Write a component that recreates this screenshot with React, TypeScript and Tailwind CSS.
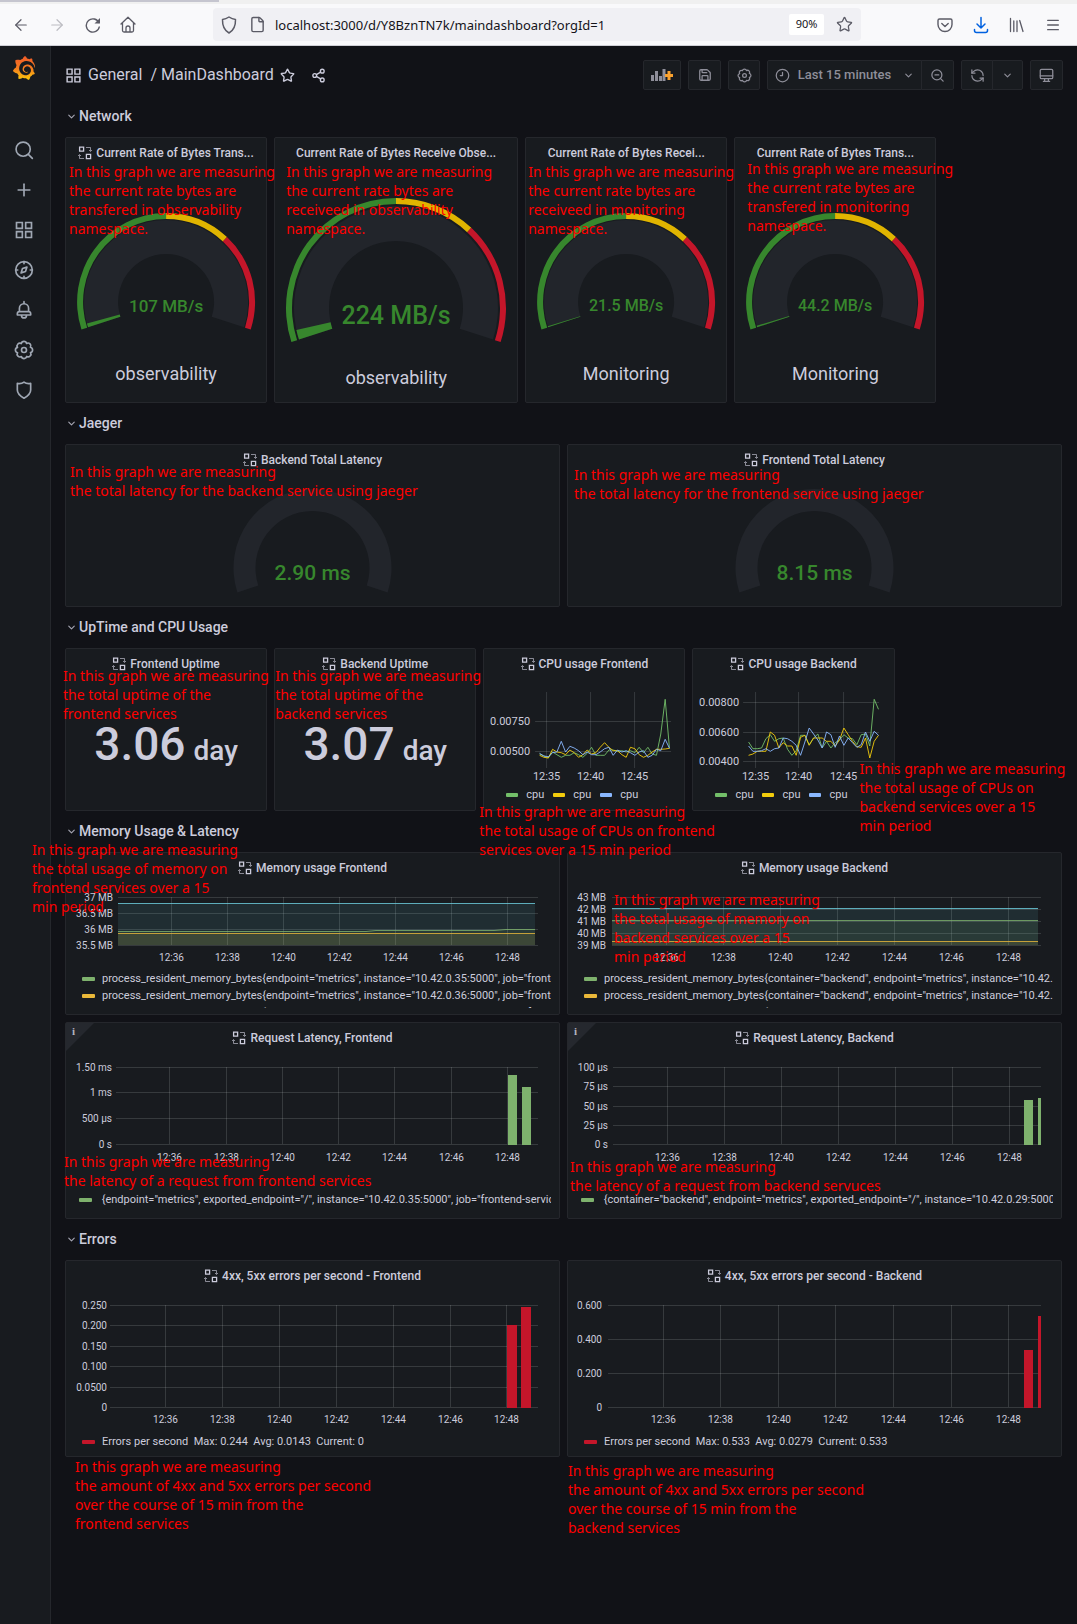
import React from "react";
import {
  ArrowLeft,
  ArrowRight,
  ChevronDown,
  File,
  Menu,
  Plus,
  RefreshCcw,
  Save,
  Share2,
  Star,
  ZoomOut,
} from "lucide-react";
import { SiGrafana } from "react-icons/si";

/* ---------- icons ---------- */

type IconProps = { size?: number; className?: string };

function Svg({ size = 20, className, children }: IconProps & { children: React.ReactNode }) {
  return (
    <svg
      width={size}
      height={size}
      viewBox="0 0 24 24"
      fill="none"
      stroke="currentColor"
      strokeWidth={2}
      strokeLinecap="round"
      strokeLinejoin="round"
      className={className}
      aria-hidden="true"
    >
      {children}
    </svg>
  );
}

const GEAR_PATH = (() => {
  const pts = Array.from({ length: 8 }, (_, k) => {
    const a = ((k * 45 + 22) * Math.PI) / 180;
    return [12 + 8.4 * Math.cos(a), 12 + 8.4 * Math.sin(a)].map((v) => v.toFixed(2)).join(" ");
  });
  return `M${pts[0]}` + pts.slice(1).concat(pts[0]).map((p) => `A3.3 3.3 0 0 1 ${p}`).join("") + "Z";
})();

const GearIcon = (p: IconProps) => (
  <Svg {...p}>
    <path d={GEAR_PATH} />
    <circle cx="12" cy="12" r="3" />
  </Svg>
);
const AppsIcon = (p: IconProps) => (
  <Svg {...p}>
    <path d="M3 3h7v7H3zM14 3h7v7h-7zM3 14h7v7H3zM14 14h7v7h-7z" strokeLinejoin="miter" />
  </Svg>
);
const SearchIcon = (p: IconProps) => (
  <Svg {...p}>
    <circle cx="11" cy="11" r="8.5" />
    <path d="M17.2 17.2 22 22" />
  </Svg>
);
const CompassIcon = (p: IconProps) => (
  <Svg {...p}>
    <circle cx="12" cy="12" r="10" />
    <path d="M12 2v2.500M12 19.500V22M2 12h2.500M19.500 12H22M15.500 8.500l-1.700 5.300-5.300 1.700 1.700-5.300z" />
  </Svg>
);
const BellIcon = (p: IconProps) => (
  <Svg {...p}>
    <path d="M12 2v2M6.500 14V10a5.500 5.500 0 0 1 11 0v4M6.500 14a2.500 2.500 0 0 0-2.500 2.500V18h16v-1.500a2.500 2.500 0 0 0-2.500-2.500zM9 18.500a3 3 0 0 0 6 0" />
  </Svg>
);
const ShieldIcon = (p: IconProps) => (
  <Svg {...p}>
    <path d="M12 2.500c2.500 1.800 5 2.200 8 1.500v8c0 4-3.500 7.300-8 9.800-4.500-2.500-8-5.800-8-9.800V4c3 .7 5.500.3 8-1.500z" />
  </Svg>
);
const HistoryIcon = (p: IconProps) => (
  <Svg {...p}>
    <circle cx="12" cy="12" r="10" />
    <path d="M12 7v5H8.500" />
  </Svg>
);
const MonitorIcon = (p: IconProps) => (
  <Svg {...p}>
    <rect x="2" y="2" width="20" height="15" rx="2" />
    <path d="M2 12.500h20M9 17v4M15 17v4M7 21.500h10" />
  </Svg>
);
const AddPanelIcon = () => (
  <svg width="22" height="14" viewBox="0 0 22 14" aria-hidden="true">
    <path d="M0 7h3v6H0zM4 3h3v10H4zM8 8h3v5H8zM11.500 1h3v12h-3z" fill="#8e8e99" />
    <path d="M16.500 3h3v3h2.500v3h-2.500v3h-3V9H14V6h2.500z" fill="#f9a12e" />
  </svg>
);
const TransformIcon = () => (
  <svg width="14" height="14" viewBox="0 0 14 14" fill="none" stroke="#ccccdc" aria-hidden="true" className="shrink-0">
    <path d="M1.600 1.100h4v4h-4zM8.400 8.400h4.200v4.200H8.400z" strokeWidth="1.300" />
    <path d="M8 1.500h4.500v3.500M11 4l1.500 1.500L14 4M6 12.500H1.500V9M0 10l1.500-1.500L3 10" strokeWidth="0.900" opacity="0.700" />
  </svg>
);

const BrowserShield = () => (
  <svg width="16" height="18" viewBox="0 0 16 18" fill="none" stroke="#5b5b66" strokeWidth="1.500" strokeLinejoin="round" aria-hidden="true">
    <path d="M8 1c2.200 1.600 4.300 2.300 6.500 2.400C14.700 9.500 13 14 8 17 3 14 1.300 9.500 1.500 3.400 3.700 3.300 5.800 2.600 8 1z" />
  </svg>
);
const ReloadIcon = () => (
  <svg width="16" height="16" viewBox="0 0 16 16" fill="none" stroke="#5b5b66" strokeWidth="1.400" aria-hidden="true">
    <path d="M14 6A6.600 6.600 0 1 0 14.400 9.500" />
    <path d="M15 1v5.500H9.500z" fill="#5b5b66" stroke="none" />
  </svg>
);
const HomeIcon = () => (
  <svg width="16" height="17" viewBox="0 0 16 17" fill="none" stroke="#5b5b66" strokeWidth="1.300" strokeLinejoin="round" strokeLinecap="round" aria-hidden="true">
    <path d="M1 8 8 1.200 15 8M2.500 7v7.500a1.500 1.500 0 0 0 1.500 1.500h8a1.500 1.500 0 0 0 1.500-1.500V7M6 16v-4a2 2 0 0 1 4 0v4" />
  </svg>
);
const PocketIcon = () => (
  <svg width="16" height="16" viewBox="0 0 16 16" fill="none" stroke="#5b5b66" strokeWidth="1.400" strokeLinecap="round" strokeLinejoin="round" aria-hidden="true">
    <path d="M2.500 2h11A1.500 1.500 0 0 1 15 3.500V7.500a7 7 0 0 1-14 0v-4A1.500 1.500 0 0 1 2.500 2zM4.800 6.500 8 9.500l3.200-3" />
  </svg>
);
const DownloadIcon = () => (
  <svg width="16" height="18" viewBox="0 0 16 18" fill="none" stroke="#0061e0" strokeWidth="1.500" strokeLinecap="round" strokeLinejoin="round" aria-hidden="true">
    <path d="M8 1.500V12M4 8l4 4 4-4M1.500 13.500v1a2 2 0 0 0 2 2h9a2 2 0 0 0 2-2v-1" />
  </svg>
);
const LibraryIcon = () => (
  <svg width="16" height="16" viewBox="0 0 16 16" fill="none" stroke="#5b5b66" strokeWidth="1.300" strokeLinecap="round" aria-hidden="true">
    <path d="M1.500 1.500v13M4.800 4v10.500M8 4v10.500M10.700 3.500l3.300 11" />
  </svg>
);

/* ---------- shared pieces ---------- */

type Note = { pos: string; lines: string[] };

function Annotation({ pos, lines }: Note) {
  return (
    <p className={`pointer-events-none absolute z-10 whitespace-nowrap font-['Noto_Sans',sans-serif] text-[14px] leading-[19px] text-[#ff0000] ${pos}`}>
      {lines.map((l) => (
        <span key={l} className="block">
          {l}
        </span>
      ))}
    </p>
  );
}

function Panel({
  title,
  span,
  height,
  note,
  plain,
  info,
  children,
}: {
  title: string;
  span: string;
  height: string;
  note: Note;
  plain?: boolean;
  info?: boolean;
  children: React.ReactNode;
}) {
  return (
    <section className={`relative flex flex-col rounded-[2px] border border-[#25272c] bg-[#181b1f] ${span} ${height}`}>
      {info && (
        <span className="absolute left-0 top-0 h-7 w-7 bg-[#25282e] [clip-path:polygon(0_0,100%_0,0_100%)]">
          <span className="block pl-[6px] pt-[2px] font-['Liberation_Serif',serif] text-[11px] font-bold leading-3 text-[#b4b4c0]">i</span>
        </span>
      )}
      <header className="flex h-[27px] shrink-0 items-center justify-center gap-1 px-2 pt-[3px]">
        {!plain && <TransformIcon />}
        <h2 className="whitespace-nowrap text-[12px] font-medium leading-5">{title}</h2>
      </header>
      {children}
      <Annotation {...note} />
    </section>
  );
}

function RowTitle({ children }: { children: string }) {
  return (
    <button type="button" className="flex h-[41px] w-full items-center gap-[2px] pb-px pl-px text-[14px] font-medium leading-5">
      <ChevronDown size={11} strokeWidth={2.5} className="text-[#a5a5b2]" />
      {children}
    </button>
  );
}

function PanelGrid({ children }: { children: React.ReactNode }) {
  return <div className="grid grid-cols-24 gap-[7px] pr-px">{children}</div>;
}

function polar(cx: number, cy: number, r: number, f: number) {
  const a = Math.PI * (0.9 + 1.2 * f);
  return `${(cx + r * Math.cos(a)).toFixed(2)} ${(cy + r * Math.sin(a)).toFixed(2)}`;
}

function band(cx: number, cy: number, ro: number, ri: number, from: number, to: number) {
  const large = (to - from) * 1.2 > 1 ? 1 : 0;
  return `M${polar(cx, cy, ro, from)}A${ro} ${ro} 0 ${large} 1 ${polar(cx, cy, ro, to)}L${polar(cx, cy, ri, to)}A${ri} ${ri} 0 ${large} 0 ${polar(cx, cy, ri, from)}Z`;
}

function Gauge({
  w = 200,
  cy,
  height,
  outer,
  inner,
  ring,
  value,
  label,
  size,
  textY,
}: {
  w?: number;
  cy: number;
  height: number;
  outer: number;
  inner: number;
  ring?: number;
  value: number;
  label: string;
  size: number;
  textY: number;
}) {
  const cx = w / 2;
  return (
    <svg viewBox={`0 0 ${w} ${height}`} className="w-full shrink-0" style={{ height }} role="img" aria-label={label}>
      <path d={band(cx, cy, outer, inner, 0, 1)} fill="#22252b" />
      {value > 0 && <path d={band(cx, cy, outer, inner, 0, value)} fill="#37872d" />}
      {ring && (
        <>
          <path d={band(cx, cy, ring, ring - 6, 0, 0.5)} fill="#37872d" />
          <path d={band(cx, cy, ring, ring - 6, 0.5, 0.7)} fill="#e0b400" />
          <path d={band(cx, cy, ring, ring - 6, 0.7, 1)} fill="#c4162a" />
        </>
      )}
      <text x={cx} y={textY} textAnchor="middle" fontSize={size} fontWeight="500" fill="#37872d">
        {label}
      </text>
    </svg>
  );
}

type Tick = [number, string];
type ChartProps = {
  w: number;
  h: number;
  x: [number, number];
  top: number;
  bottom: number;
  yTicks: Tick[];
  xTicks: Tick[];
  labelX: number;
  labelY: number;
  font?: number;
  children: React.ReactNode;
};

function Chart({ w, h, x, top, bottom, yTicks, xTicks, labelX, labelY, font = 10, children }: ChartProps) {
  return (
    <svg viewBox={`0 0 ${w} ${h}`} className="w-full shrink-0" style={{ height: h }} fontSize={font}>
      <g stroke="#f0fafa" strokeOpacity="0.14">
        {yTicks.map(([y]) => (
          <path key={y} d={`M${x[0]} ${y}H${x[1]}`} />
        ))}
        {xTicks.map(([v]) => (
          <path key={v} d={`M${v} ${top}V${bottom}`} />
        ))}
      </g>
      {children}
      <g fill="#ccccdc">
        {yTicks.map(([y, t]) => (
          <text key={y} x={labelX} y={y + 3} textAnchor="end">
            {t}
          </text>
        ))}
        {xTicks.map(([v, t]) => (
          <text key={v} x={v} y={labelY} textAnchor="middle">
            {t}
          </text>
        ))}
      </g>
    </svg>
  );
}

const HOURS = ["12:36", "12:38", "12:40", "12:42", "12:44", "12:46", "12:48"];
const hours = (xs: number[]): Tick[] => xs.map((v, i) => [v, HOURS[i]]);

function Bars({ color, bottom, bars }: { color: string; bottom: number; bars: [number, number, number][] }) {
  return (
    <>
      {bars.map(([x0, x1, y]) => (
        <rect key={x0} x={x0} y={y} width={x1 - x0} height={bottom - y} fill={color} />
      ))}
    </>
  );
}

function Line({ pts, color }: { pts: number[]; color: string }) {
  const d = pts.map((y, i) => `${(55.5 + i * 4.33).toFixed(1)},${(y / 3 - 46).toFixed(1)}`).join(" ");
  return <polyline points={d} fill="none" stroke={color} strokeWidth="1" strokeOpacity="0.9" />;
}

function Area({ x, points, bottom, color }: { x: [number, number]; points: string; bottom: number; color: string }) {
  return (
    <>
      <polygon points={`${x[0]},${bottom} ${points} ${x[1]},${bottom}`} fill={color} fillOpacity="0.1" />
      <polyline points={points} fill="none" stroke={color} strokeWidth="1" strokeOpacity="0.8" />
    </>
  );
}

const GREEN = "bg-[#7eb26d]";
const YELLOW = "bg-[#eab839]";
const BLUE = "bg-[#6ed0e0]";
const RED = "bg-[#c4162a]";

function Legend({ items, pad }: { items: [string, string][]; pad: string }) {
  return (
    <ul className={`mr-2 overflow-hidden text-[11px] leading-[17px] ${pad}`}>
      {items.map(([c, t], i) => (
        <li key={i} className="flex items-center gap-[7px] whitespace-pre">
          <span className={`h-1 w-[13px] shrink-0 rounded-[1px] ${c}`} />
          {t}
        </li>
      ))}
    </ul>
  );
}

function CpuLegend() {
  return (
    <ul className="flex gap-[9px] pl-[22px] text-[11px] leading-[17px]">
      {["bg-[#73bf69]", "bg-[#f2cc0c]", "bg-[#8ab8ff]"].map((c) => (
        <li key={c} className="flex items-center gap-2">
          <span className={`h-1 w-3 rounded-[1px] ${c}`} />
          cpu
        </li>
      ))}
    </ul>
  );
}

function Stat({ value }: { value: string }) {
  return (
    <p className="flex items-baseline justify-center gap-2 pt-10 font-medium leading-[56px]">
      <span className="text-[46px]">{value}</span>
      <span className="text-[28px]">day</span>
    </p>
  );
}

function GaugeLabel({ children }: { children: string }) {
  return <p className="pt-4 text-center text-[18px] leading-6">{children}</p>;
}

/* ---------- chrome ---------- */

function BrowserBar() {
  return (
    <header className="border-b border-[#cfcfd6] bg-[#f9f9fb] text-[#5b5b66]">
      <div className="h-1 bg-[#f0f0f0]">
        <div className="h-[2px] w-[219px] bg-[#c5c5cf]" />
      </div>
      <div className="flex h-[41px] items-center pl-3 pr-4">
        <nav className="flex w-[201px] items-center gap-[18px]">
          <button type="button" aria-label="Back"><ArrowLeft size={18} strokeWidth={1.6} /></button>
          <button type="button" aria-label="Forward" className="text-[#bcbcc2]"><ArrowRight size={18} strokeWidth={1.6} /></button>
          <button type="button" aria-label="Reload" className="pl-px"><ReloadIcon /></button>
          <button type="button" aria-label="Home" className="pl-px"><HomeIcon /></button>
        </nav>
        <div className="flex h-[33px] max-w-[648px] flex-1 items-center rounded bg-[#f0f0f4] pl-2 pr-2">
          <BrowserShield />
          <File size={17} strokeWidth={2} className="ml-3 mr-[9px] shrink-0" />
          <input
            aria-label="Address"
            readOnly
            value="localhost:3000/d/Y8BznTN7k/maindashboard?orgId=1"
            className="min-w-0 flex-1 bg-transparent pt-[2px] font-['Noto_Sans',sans-serif] text-[13px] text-[#15141a] outline-none"
          />
          <span className="flex h-[21px] w-[35px] items-center justify-center rounded-[2px] bg-white font-['Noto_Sans',sans-serif] text-[11px] text-[#15141a]">90%</span>
          <button type="button" aria-label="Bookmark" className="ml-3"><Star size={17} strokeWidth={1.8} /></button>
        </div>
        <div className="ml-auto flex items-center gap-5">
          <button type="button" aria-label="Pocket"><PocketIcon /></button>
          <button type="button" aria-label="Downloads"><DownloadIcon /></button>
          <button type="button" aria-label="Library"><LibraryIcon /></button>
          <button type="button" aria-label="Menu"><Menu size={16} strokeWidth={2} /></button>
        </div>
      </div>
    </header>
  );
}

const TOOL = "flex h-[30px] items-center justify-center border border-[#25272c] bg-[#181b1f] text-[#8e8e99]";

function Toolbar() {
  return (
    <div className="flex h-[50px] items-start justify-between pt-[14px]">
      <div className="flex h-[30px] items-center text-[16px]">
        <AppsIcon size={17} className="mr-[6px]" />
        <a href="#general">General</a>
        <span className="mx-1 pl-1">/</span>
        <a href="#main">MainDashboard</a>
        <button type="button" aria-label="Mark as favorite" className="ml-[6px]"><Star size={15} strokeWidth={2.2} /></button>
        <button type="button" aria-label="Share dashboard" className="ml-4"><Share2 size={15} strokeWidth={2.2} /></button>
      </div>
      <div className="flex gap-[7px] text-[13px] font-medium">
        <button type="button" aria-label="Add panel" className={`${TOOL} w-[38px] rounded-[2px]`}><AddPanelIcon /></button>
        <button type="button" aria-label="Save dashboard" className={`${TOOL} w-[33px] rounded-[2px]`}><Save size={14} strokeWidth={2.2} /></button>
        <button type="button" aria-label="Dashboard settings" className={`${TOOL} w-[32px] rounded-[2px]`}><GearIcon size={15} /></button>
        <div className="flex">
          <button type="button" className={`${TOOL} w-[155px] rounded-l-[2px]`}>
            <HistoryIcon size={15} />
            <span className="ml-2 mr-3">Last 15 minutes</span>
            <ChevronDown size={11} strokeWidth={2.5} />
          </button>
          <button type="button" aria-label="Zoom out" className={`${TOOL} -ml-px w-[33px] rounded-r-[2px]`}><ZoomOut size={15} /></button>
        </div>
        <div className="flex">
          <button type="button" aria-label="Refresh" className={`${TOOL} w-[32px] rounded-l-[2px]`}><RefreshCcw size={15} /></button>
          <button type="button" aria-label="Refresh interval" className={`${TOOL} -ml-px w-[31px] rounded-r-[2px]`}><ChevronDown size={11} strokeWidth={2.5} /></button>
        </div>
        <button type="button" aria-label="Cycle view mode" className={`${TOOL} w-[33px] rounded-[2px]`}><MonitorIcon size={15} /></button>
      </div>
    </div>
  );
}

function Sidebar() {
  return (
    <nav className="flex w-[51px] shrink-0 flex-col items-center border-r border-[#25272c] bg-[#181b1f] pr-[3px] pt-[10px] text-[#9fa7b3]">
      <svg width="0" height="0" className="absolute">
        <linearGradient id="logo" x1="0" y1="0" x2="0" y2="1">
          <stop offset="0" stopColor="#f05a28" />
          <stop offset="0.5" stopColor="#f47b20" />
          <stop offset="1" stopColor="#fbca0a" />
        </linearGradient>
      </svg>
      <a href="#home" aria-label="Grafana" className="mb-[60px]"><SiGrafana size={24} fill="url(#logo)" /></a>
      <div className="flex flex-col gap-5">
        <a href="#search" aria-label="Search"><SearchIcon /></a>
        <a href="#create" aria-label="Create"><Plus size={20} /></a>
        <a href="#dashboards" aria-label="Dashboards"><AppsIcon /></a>
        <a href="#explore" aria-label="Explore"><CompassIcon /></a>
        <a href="#alerting" aria-label="Alerting"><BellIcon /></a>
        <a href="#configuration" aria-label="Configuration"><GearIcon /></a>
        <a href="#admin" aria-label="Server admin"><ShieldIcon /></a>
      </div>
    </nav>
  );
}

/* ---------- data ---------- */

const FIRST = "In this graph we are measuring";

const CPU_F = {
  green: [372, 378, 384, 366, 374, 382, 376, 376, 368, 374, 382, 370, 352, 376, 376, 376, 360, 360, 364, 362, 366, 362, 368, 352, 368, 352, 372, 376, 312, 208, 355],
  yellow: [376, 382, 384, 358, 366, 368, 374, 360, 368, 382, 374, 360, 372, 368, 352, 338, 352, 362, 362, 374, 382, 352, 356, 374, 382, 376, 366, 358, 358, 357, 355],
  blue: [370, 378, 380, 368, 366, 334, 366, 349, 354, 362, 374, 366, 374, 374, 366, 356, 352, 376, 360, 366, 362, 368, 376, 366, 362, 382, 376, 358, 362, 328, 355],
};
const CPU_B = {
  green: [336, 356, 356, 354, 326, 314, 334, 326, 324, 358, 376, 362, 316, 316, 344, 324, 312, 354, 334, 354, 338, 330, 314, 324, 326, 344, 314, 312, 348, 208, 238],
  yellow: [376, 372, 364, 364, 364, 306, 316, 354, 338, 348, 348, 376, 322, 316, 346, 324, 324, 324, 334, 334, 348, 330, 294, 314, 334, 350, 352, 324, 384, 334, 316],
  blue: [348, 364, 364, 362, 356, 364, 356, 354, 324, 326, 334, 346, 376, 336, 294, 312, 330, 354, 306, 314, 352, 318, 346, 324, 338, 352, 344, 306, 334, 304, 316],
};

const MEM = "process_resident_memory_bytes";

export default function App() {
  return (
    <div className="flex min-h-screen flex-col bg-[#111217] font-[Roboto,sans-serif] text-[#ccccdc]">
      <BrowserBar />
      <div className="flex flex-1">
        <Sidebar />
        <main className="min-w-0 flex-1 px-[14px] pb-10">
          <Toolbar />

          <RowTitle>Network</RowTitle>
          <PanelGrid>
            <Panel title="Current Rate of Bytes Trans..." span="col-span-5" height="h-[266px]"
              note={{ pos: "left-[3px] top-6", lines: [FIRST, "the current rate bytes are", "transfered in observability", "namespace."] }}>
              <Gauge cy={137} height={181} outer={82} inner={48} ring={89} value={0.013} label="107 MB/s" size={17} textY={147} />
              <GaugeLabel>observability</GaugeLabel>
            </Panel>
            <Panel plain title="Current Rate of Bytes Receive Obse..." span="col-span-6" height="h-[266px]"
              note={{ pos: "left-[11px] top-6", lines: [FIRST, "the current rate bytes are", "receiveed in observability", "namespace."] }}>
              <Gauge w={240} cy={143} height={185} outer={102} inner={67} ring={110} value={0.026} label="224 MB/s" size={25} textY={159} />
              <GaugeLabel>observability</GaugeLabel>
            </Panel>
            <Panel plain title="Current Rate of Bytes Recei..." span="col-span-5" height="h-[266px]"
              note={{ pos: "left-[2px] top-6", lines: [FIRST, "the current rate bytes are", "receiveed in monitoring", "namespace."] }}>
              <Gauge cy={137} height={181} outer={82} inner={48} ring={89} value={0.004} label="21.5 MB/s" size={16} textY={146} />
              <GaugeLabel>Monitoring</GaugeLabel>
            </Panel>
            <Panel plain title="Current Rate of Bytes Trans..." span="col-span-5" height="h-[266px]"
              note={{ pos: "left-3 top-[21px]", lines: [FIRST, "the current rate bytes are", "transfered in monitoring", "namespace."] }}>
              <Gauge cy={137} height={181} outer={82} inner={48} ring={89} value={0.005} label="44.2 MB/s" size={16} textY={146} />
              <GaugeLabel>Monitoring</GaugeLabel>
            </Panel>
          </PanelGrid>

          <RowTitle>Jaeger</RowTitle>
          <PanelGrid>
            <Panel title="Backend Total Latency" span="col-span-12" height="h-[163px]"
              note={{ pos: "left-[4px] top-[17px]", lines: [FIRST, "the total latency for the backend service using jaeger"] }}>
              <Gauge cy={96} height={126} outer={79} inner={57} value={0} label="2.90 ms" size={21} textY={108} />
            </Panel>
            <Panel title="Frontend Total Latency" span="col-span-12" height="h-[163px]"
              note={{ pos: "left-[6px] top-[20px]", lines: [FIRST, "the total latency for the frontend service using jaeger"] }}>
              <Gauge cy={96} height={126} outer={79} inner={57} value={0} label="8.15 ms" size={21} textY={108} />
            </Panel>
          </PanelGrid>

          <RowTitle>UpTime and CPU Usage</RowTitle>
          <PanelGrid>
            <Panel title="Frontend Uptime" span="col-span-5" height="h-[163px]"
              note={{ pos: "left-[-3px] top-[17px]", lines: [FIRST, "the total uptime of the", "frontend services"] }}>
              <Stat value="3.06" />
            </Panel>
            <Panel title="Backend Uptime" span="col-span-5" height="h-[163px]"
              note={{ pos: "left-0 top-[17px]", lines: [FIRST, "the total uptime of the", "backend services"] }}>
              <Stat value="3.07" />
            </Panel>
            <Panel title="CPU usage Frontend" span="col-span-5" height="h-[163px]"
              note={{ pos: "left-[-5px] top-[153px]", lines: [FIRST, "the total usage of CPUs on frontend", "services over a 15 min period"] }}>
              <Chart w={200} h={110} x={[51, 187]} top={16} bottom={92} font={11} labelX={46} labelY={104}
                yTicks={[[45.5, "0.00750"], [75.5, "0.00500"]]}
                xTicks={[[62.5, "12:35"], [106.5, "12:40"], [150.5, "12:45"]]}>
                <Line pts={CPU_F.green} color="#73bf69" />
                <Line pts={CPU_F.yellow} color="#f2cc0c" />
                <Line pts={CPU_F.blue} color="#8ab8ff" />
              </Chart>
              <CpuLegend />
            </Panel>
            <Panel title="CPU usage Backend" span="col-span-5" height="h-[163px]"
              note={{ pos: "left-[166px] top-[110px]", lines: [FIRST, "the total usage of CPUs on", "backend services over a 15", "min period"] }}>
              <Chart w={200} h={110} x={[50, 186]} top={16} bottom={92} font={11} labelX={46} labelY={104}
                yTicks={[[26.5, "0.00800"], [56.5, "0.00600"], [85.5, "0.00400"]]}
                xTicks={[[62.5, "12:35"], [105.5, "12:40"], [150.5, "12:45"]]}>
                <Line pts={CPU_B.green} color="#73bf69" />
                <Line pts={CPU_B.yellow} color="#f2cc0c" />
                <Line pts={CPU_B.blue} color="#8ab8ff" />
              </Chart>
              <CpuLegend />
            </Panel>
          </PanelGrid>

          <RowTitle>{"Memory Usage & Latency"}</RowTitle>
          <PanelGrid>
            <Panel title="Memory usage Frontend" span="col-span-12" height="h-[163px]"
              note={{ pos: "left-[-34px] top-[-13px]", lines: [FIRST, "the total usage of memory on", "frontend services over a 15", "min period"] }}>
              <Chart w={493} h={90} x={[52, 472]} top={17} bottom={65} labelX={47} labelY={81}
                yTicks={[[17.5, "37 MB"], [33.5, "36.5 MB"], [49.5, "36 MB"], [65.5, "35.5 MB"]]}
                xTicks={hours([105.5, 161.5, 217.5, 273.5, 329.5, 385.5, 441.5])}>
                <Area x={[52, 469]} points="52,23.5 469,23.5" bottom={65} color="#6ed0e0" />
                <Area x={[52, 469]} points="52,51.5 300,51.5 310,50.5 428,50.5 440,49.5 469,49.5" bottom={65} color="#7eb26d" />
                <Area x={[52, 469]} points="52,53.5 469,53.5" bottom={65} color="#eab839" />
              </Chart>
              <div className="h-[38px] overflow-hidden">
                <Legend pad="pl-4" items={[
                  [GREEN, `${MEM}{endpoint="metrics", instance="10.42.0.35:5000", job="frontend-service"}`],
                  [YELLOW, `${MEM}{endpoint="metrics", instance="10.42.0.36:5000", job="frontend-service"}`],
                  [BLUE, `${MEM}{endpoint="metrics", instance="10.42.0.37:5000", job="frontend-service"}`],
                ]} />
              </div>
            </Panel>
            <Panel title="Memory usage Backend" span="col-span-12" height="h-[163px]"
              note={{ pos: "left-[46px] top-[37px]", lines: [FIRST, "the total usage of memory on", "backend services over a 15", "min period"] }}>
              <Chart w={493} h={90} x={[44, 473]} top={17} bottom={65} labelX={38} labelY={81}
                yTicks={[[17.5, "43 MB"], [29.5, "42 MB"], [41.5, "41 MB"], [53.5, "40 MB"], [65.5, "39 MB"]]}
                xTicks={hours([98.5, 155.5, 212.5, 269.5, 326.5, 383.5, 440.5])}>
                <Area x={[44, 470]} points="44,28.5 470,28.5" bottom={65} color="#6ed0e0" />
                <Area x={[44, 470]} points="44,40.5 470,40.5" bottom={65} color="#7eb26d" />
                <Area x={[44, 470]} points="44,61.5 470,61.5" bottom={65} color="#eab839" />
              </Chart>
              <div className="h-[38px] overflow-hidden">
                <Legend pad="pl-4" items={[
                  [GREEN, `${MEM}{container="backend", endpoint="metrics", instance="10.42.0.29:5000"}`],
                  [YELLOW, `${MEM}{container="backend", endpoint="metrics", instance="10.42.0.30:5000"}`],
                  [BLUE, `${MEM}{container="backend", endpoint="metrics", instance="10.42.0.31:5000"}`],
                ]} />
              </div>
            </Panel>

            <Panel info title="Request Latency, Frontend" span="col-span-12" height="h-[197px]"
              note={{ pos: "left-[-2px] top-[129px]", lines: [FIRST, "the latency of a request from frontend services"] }}>
              <Chart w={493} h={141} x={[50, 472]} top={17} bottom={94} labelX={46} labelY={111}
                yTicks={[[17.5, "1.50 ms"], [42.5, "1 ms"], [68.5, "500 µs"], [94.5, "0 s"]]}
                xTicks={hours([103.5, 160.5, 216.5, 272.5, 328.5, 385.5, 441.5])}>
                <Bars color="#7eb26d" bottom={95} bars={[[442, 451, 25], [456, 465, 37]]} />
              </Chart>
              <Legend pad="pl-[13px]" items={[[GREEN, ' {endpoint="metrics", exported_endpoint="/", instance="10.42.0.35:5000", job="frontend-service"}']]} />
            </Panel>
            <Panel info title="Request Latency, Backend" span="col-span-12" height="h-[197px]"
              note={{ pos: "left-[2px] top-[134px]", lines: [FIRST, "the latency of a request from backend servuces"] }}>
              <Chart w={493} h={141} x={[45, 473]} top={17} bottom={94} labelX={40} labelY={111}
                yTicks={[[17.5, "100 µs"], [36.5, "75 µs"], [56.5, "50 µs"], [75.5, "25 µs"], [94.5, "0 s"]]}
                xTicks={hours([99.5, 156.5, 213.5, 270.5, 327.5, 384.5, 441.5])}>
                <Bars color="#7eb26d" bottom={95} bars={[[456, 465, 50], [470, 473, 48]]} />
              </Chart>
              <Legend pad="pl-[13px]" items={[[GREEN, ' {container="backend", endpoint="metrics", exported_endpoint="/", instance="10.42.0.29:5000"}']]} />
            </Panel>
          </PanelGrid>

          <RowTitle>Errors</RowTitle>
          <PanelGrid>
            <Panel title="4xx, 5xx errors per second - Frontend" span="col-span-12" height="h-[197px]"
              note={{ pos: "left-[9px] top-[196px]", lines: [FIRST, "the amount of 4xx and 5xx errors per second", "over the course of 15 min from the", "frontend services"] }}>
              <Chart w={493} h={145} x={[44, 472]} top={17} bottom={119} labelX={41} labelY={135}
                yTicks={[[17.5, "0.250"], [37.5, "0.200"], [58.5, "0.150"], [78.5, "0.100"], [99.5, "0.0500"], [119.5, "0"]]}
                xTicks={hours([99.5, 156.5, 213.5, 270.5, 327.5, 384.5, 440.5])}>
                <Bars color="#c4162a" bottom={120} bars={[[441, 451, 37], [455, 465, 19]]} />
              </Chart>
              <Legend pad="pl-4" items={[[RED, "Errors per second  Max: 0.244  Avg: 0.0143  Current: 0"]]} />
            </Panel>
            <Panel title="4xx, 5xx errors per second - Backend" span="col-span-12" height="h-[197px]"
              note={{ pos: "left-0 top-[200px]", lines: [FIRST, "the amount of 4xx and 5xx errors per second", "over the course of 15 min from the", "backend services"] }}>
              <Chart w={493} h={145} x={[40, 473]} top={17} bottom={119} labelX={34} labelY={135}
                yTicks={[[17.5, "0.600"], [51.5, "0.400"], [85.5, "0.200"], [119.5, "0"]]}
                xTicks={hours([95.5, 152.5, 210.5, 267.5, 325.5, 383.5, 440.5])}>
                <Bars color="#c4162a" bottom={120} bars={[[456, 465, 62], [470, 473, 28]]} />
              </Chart>
              <Legend pad="pl-4" items={[[RED, "Errors per second  Max: 0.533  Avg: 0.0279  Current: 0.533"]]} />
            </Panel>
          </PanelGrid>
        </main>
      </div>
    </div>
  );
}
